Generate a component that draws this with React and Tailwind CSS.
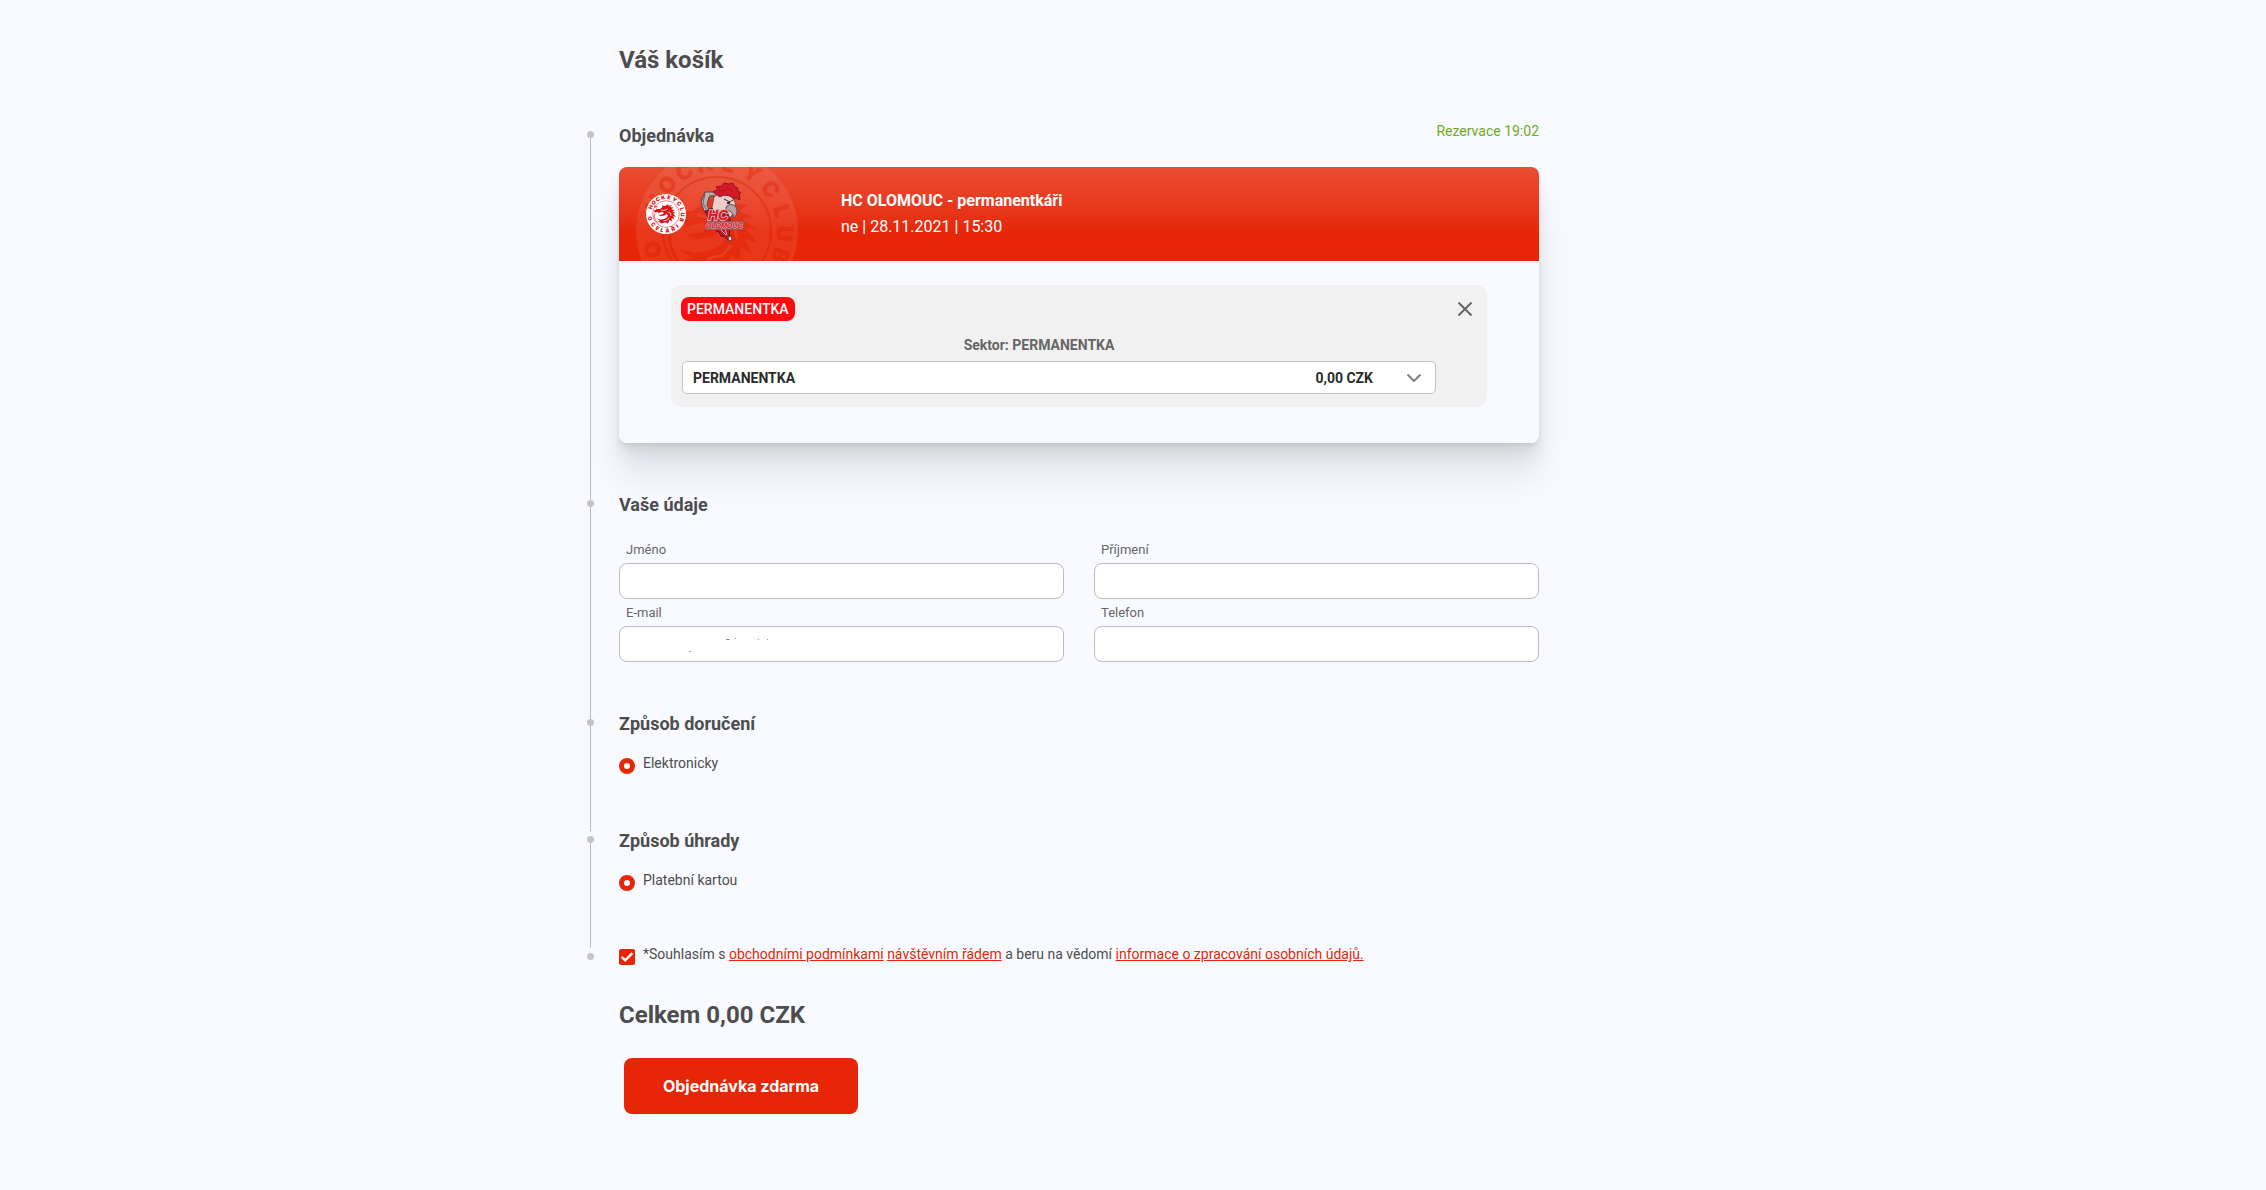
import React, { useState } from 'react';

const TOP_LETTERS = [
    ['H', -66], ['O', -47], ['C', -29], ['K', -10], ['E', 10],
    ['Y', 31], ['C', 52], ['L', 73], ['U', 92], ['B', 111],
];
const BOTTOM_LETTERS = [
    ['O', 74], ['C', 50], ['E', 31], ['L', 14], ['Á', -5], ['Ř', -26], ['I', -43],
];

const Crest = ({ disc, ink, className }) => (
    <svg viewBox="-81 -81 162 162" className={className} aria-hidden="true">
        <circle r="81" fill={disc} />
        <circle r="54" fill="none" stroke={ink} strokeWidth="2" />
        <g fill={ink} fontFamily="Inter, sans-serif" fontWeight="900" fontSize="22" textAnchor="middle">
            {TOP_LETTERS.map(([letter, angle]) => (
                <text key={angle} y="-60" transform={`rotate(${angle})`}>{letter}</text>
            ))}
            {BOTTOM_LETTERS.map(([letter, angle]) => (
                <text key={angle} y="75" transform={`rotate(${angle})`}>{letter}</text>
            ))}
        </g>
        <path
            fill={ink}
            d="M-50-12L-38-20L-24-20L-14-28L-18-34L-2-32L10-42L8-33L24-36L16-28L30-26L22-20L36-14L25-12L40-2L28-3L40 12L28 8L34 22L23 16L24 30L14 24L8 38L-2 33L-18 38L-34 28L-24 28L-38 18L-22 22L-8 20L4 14L8 6L2 0L-6 6L-20 8L-32 4L-16 2L-8-4L-14-8L-26-6L-32-2L-32-8L-44-6Z"
        />
        <path fill="none" stroke={disc} strokeWidth="3" d="M-20-16L-8-14L6-20M8-8L18-4L20 8M-10 28L6 24L14 14" />
        <path fill="none" stroke={ink} strokeWidth="3" d="M-46-2c-4 14 2 30 16 40M-38-24l-10-8 14 2" />
    </svg>
);

const RoosterLogo = ({ className }) => (
    <svg viewBox="0 0 46 64" className={className} aria-hidden="true">
        <path d="M1 20L5 10l12 0 2 4-10 1-2 8 3 7-6-1z" fill="#b9aeb0" stroke="#6d3a3c" strokeWidth="1" />
        <path d="M5 12l-2 9 3 6M9 14l7-1" fill="none" stroke="#7d5557" strokeWidth="1" />
        <path d="M12 25l2-10c4-4 10-5 16-3l5 8 1 7-5 8-10 2-8-2z" fill="#efcdc9" stroke="#7c4548" strokeWidth="1" />
        <path d="M13 10l5-3-2-2 6-1 2-3 5 1 4-1 1 3 4 2-1 2 4 3-2 1 1 6-4-2-3 0c-4-3-9-4-13-1z" fill="#d41927" stroke="#8f1620" strokeWidth="1" />
        <path d="M19 9l7-1M26 5l6 4" stroke="#9c111c" strokeWidth="1" fill="none" />
        <path d="M24 17l6 3 3-2" fill="none" stroke="#3d2226" strokeWidth="1" />
        <path d="M27 20h3v2h-3z" fill="#3d2226" />
        <path d="M26 25c4-4 10-3 11 3 0 4-1 6-3 8-1-5-4-8-8-8z" fill="#b8a3a4" stroke="#704a4d" strokeWidth="1" />
        <path d="M5 29l7-3 3 5 13 1 3 8-5 8-9-1-8-9z" fill="#b7131f" stroke="#6b1720" strokeWidth="1" />
        <path d="M16 46l9 0 5 2-1 5 2 4-2 2-4-4-4-1-2-4-3-1z" fill="#c01722" stroke="#5f1820" strokeWidth="1" />
        <path d="M21 48l5 5M25 47l2 6" stroke="#e7b3b3" strokeWidth="1" fill="none" />
        <path d="M28 55l3-1 1 4-3 1z" fill="#ece3e3" stroke="#6b3f44" strokeWidth="1" />
        <path d="M7 39h37l-1 9H5z" fill="#a5525a" />
        <g fill="#e0121f" stroke="#dbaeb0" paintOrder="stroke" fontFamily="Liberation Sans, sans-serif" fontWeight="700" fontStyle="italic">
            <text x="8" y="38" fontSize="14" strokeWidth="2">HC</text>
            <text x="6" y="46" fontSize="7" strokeWidth="1">OLOMOUC</text>
        </g>
    </svg>
);

// One step of the order: a dot with a line on the left, content on the right
const Step = ({ joined, ended, last, children }) => (
    <section className={`flex max-w-[952px] gap-[25px] ${last ? '-mt-1' : ''}`}>
        <div className={`flex w-[7px] shrink-0 flex-col items-center ${last ? 'pt-1' : ''}`}>
            <span className={`h-[5px] w-px ${joined ? 'bg-[#bcbcbc]' : ''}`} />
            <span className="size-[7px] rounded-full bg-[#c4c4c4]" />
            {!ended && <span className="w-px flex-1 bg-[#bcbcbc]" />}
        </div>
        <div className={`min-w-0 flex-1 ${last ? '' : 'pb-[52px]'}`}>{children}</div>
    </section>
);

const StepTitle = ({ children }) => <h2 className="text-lg/5 font-bold">{children}</h2>;

const Field = ({ id, label, type = 'text', children }) => (
    <div>
        <label htmlFor={id} className="mb-[3px] block pl-[7px] text-[13px]/5 text-[#666]">
            {label}
        </label>
        <div className="relative">
            <input
                id={id}
                type={type}
                className="block h-9 w-full rounded-lg border border-[#bcbcbc] bg-white px-3 text-sm outline-none focus:border-[#e62606]"
            />
            {children}
        </div>
    </div>
);

const Radio = ({ id, name, label }) => (
    <div className="mt-[19px] flex items-start gap-2 pb-[5px] text-sm/5">
        <input
            id={id}
            name={name}
            type="radio"
            defaultChecked
            className="mt-[5px] size-4 shrink-0 appearance-none rounded-full border-[5px] border-[#e62606] bg-white"
        />
        <label htmlFor={id}>{label}</label>
    </div>
);

const App = () => {
    const [agreed, setAgreed] = useState(true);
    const link = 'text-[#e62606] underline';

    return (
        <main className="min-h-screen bg-[#f8faff] px-4 pt-[46px] pb-[76px] font-[Roboto,sans-serif] text-[#4d4d4d]">
            <div className="mx-auto max-w-[1092px]">
                <h1 className="mb-[52px] pl-8 text-2xl/7 font-bold">Váš košík</h1>

                <Step>
                    <div className="flex items-start justify-between">
                        <StepTitle>Objednávka</StepTitle>
                        <p className="text-sm/[10px] text-[#6faa24]">Rezervace 19:02</p>
                    </div>
                    <article className="mt-[21px] rounded-lg shadow-[0_2px_3px_rgba(0,0,0,0.05),0_6px_8px_rgba(0,0,0,0.05),0_14px_18px_rgba(0,0,0,0.06),0_34px_34px_rgba(0,0,0,0.08)]">
                        <header className="relative flex h-[94px] items-center overflow-hidden rounded-t-lg bg-linear-to-b from-[#e94d32] to-[#e62606] to-70% text-white">
                            <div className="absolute -top-[17px] left-[17px] opacity-50">
                                <Crest disc="rgba(255,255,255,0.16)" ink="rgba(222,40,12,0.7)" className="size-[162px]" />
                            </div>
                            <div className="relative flex w-[222px] shrink-0 items-center gap-[14px] pl-[27px]">
                                <Crest disc="#fff" ink="#dd1015" className="size-10" />
                                <RoosterLogo className="h-16 w-[46px]" />
                            </div>
                            <div className="relative text-base/[26px]">
                                <h3 className="font-bold">HC OLOMOUC - permanentkáři</h3>
                                <p>ne | 28.11.2021 | 15:30</p>
                            </div>
                        </header>
                        <div className="rounded-b-lg bg-[#f8faff] px-[52px] pt-6 pb-9">
                            <div className="rounded-[10px] bg-[#f1f1f1] px-[10px] pt-3 pb-[13px]">
                                <div className="flex items-center justify-between">
                                    <span className="rounded-lg bg-[#ff0a0f] px-[6px] text-sm/6 font-medium text-white">PERMANENTKA</span>
                                    <button type="button" aria-label="Odebrat" className="mr-[5px]">
                                        <svg viewBox="0 0 14 14" className="size-[14px]" fill="none" stroke="#666" strokeWidth="2">
                                            <path d="M0.5 0.5l13 13M13.5 0.5l-13 13" />
                                        </svg>
                                    </button>
                                </div>
                                <label htmlFor="ticket" className="mt-[14px] block pr-20 text-center text-sm/5 font-bold text-[#666]">
                                    Sektor: PERMANENTKA
                                </label>
                                <div className="mt-[6px] mr-[41px] ml-px flex h-[33px] items-center rounded-[5px] border border-[#c4c4c4] bg-white pr-[14px] pl-[10px] text-sm font-bold text-[#2b2b2b]">
                                    <select id="ticket" className="min-w-0 flex-1 appearance-none outline-none">
                                        <option>PERMANENTKA</option>
                                    </select>
                                    <span className="pr-[34px]">0,00 CZK</span>
                                    <svg viewBox="0 0 14 8" className="h-2 w-[14px]" fill="none" stroke="#808080" strokeWidth="2">
                                        <path d="M0.5 0.5L7 7l6.5-6.5" />
                                    </svg>
                                </div>
                            </div>
                        </div>
                    </article>
                </Step>

                <Step joined>
                    <StepTitle>Vaše údaje</StepTitle>
                    <div className="mt-[25px] grid grid-cols-2 gap-x-[30px] gap-y-1">
                        <Field id="first-name" label="Jméno" />
                        <Field id="last-name" label="Příjmení" />
                        <Field id="email" label="E-mail" type="email">
                            <svg viewBox="0 0 90 16" className="pointer-events-none absolute top-[11px] left-[70px] h-4 w-[90px]" fill="#999">
                                <path d="M37 2h4v1h-4zM46 1h1v1h-1zM69 2h1v1h-1zM78 2h1v1h-1zM0 14h2v1H0z" />
                            </svg>
                        </Field>
                        <Field id="phone" label="Telefon" type="tel" />
                    </div>
                </Step>

                <Step joined>
                    <StepTitle>Způsob doručení</StepTitle>
                    <Radio id="electronic" name="delivery" label="Elektronicky" />
                </Step>

                <Step>
                    <StepTitle>Způsob úhrady</StepTitle>
                    <Radio id="card" name="payment" label="Platební kartou" />
                </Step>

                <Step ended last>
                    <div className="flex items-start gap-2 text-sm/5">
                        <span className="relative mt-[5px] block size-4 shrink-0">
                            <input
                                id="agree"
                                type="checkbox"
                                checked={agreed}
                                onChange={(e) => setAgreed(e.target.checked)}
                                className="block size-4 appearance-none rounded-xs border border-[#e62606] bg-white checked:bg-[#e62606]"
                            />
                            {agreed && (
                                <svg viewBox="0 0 16 16" className="pointer-events-none absolute inset-0 size-4" fill="none" stroke="#fff" strokeWidth="2.4">
                                    <path d="M2.8 8l3.4 3.4L13.4 4.2" />
                                </svg>
                            )}
                        </span>
                        <label htmlFor="agree">
                            *Souhlasím s <a href="#podminky" className={link}>obchodními podmínkami</a>{' '}
                            <a href="#rad" className={link}>návštěvním řádem</a> a beru na vědomí{' '}
                            <a href="#udaje" className={link}>informace o zpracování osobních údajů.</a>
                        </label>
                    </div>
                    <p className="mt-9 text-2xl/7 font-bold">Celkem 0,00 CZK</p>
                    <button type="submit" className="mt-[29px] ml-[5px] h-14 w-[234px] rounded-lg bg-[#e62606] font-[Inter,sans-serif] text-base font-bold text-white">
                        Objednávka zdarma
                    </button>
                </Step>
            </div>
        </main>
    );
};

export default App;
